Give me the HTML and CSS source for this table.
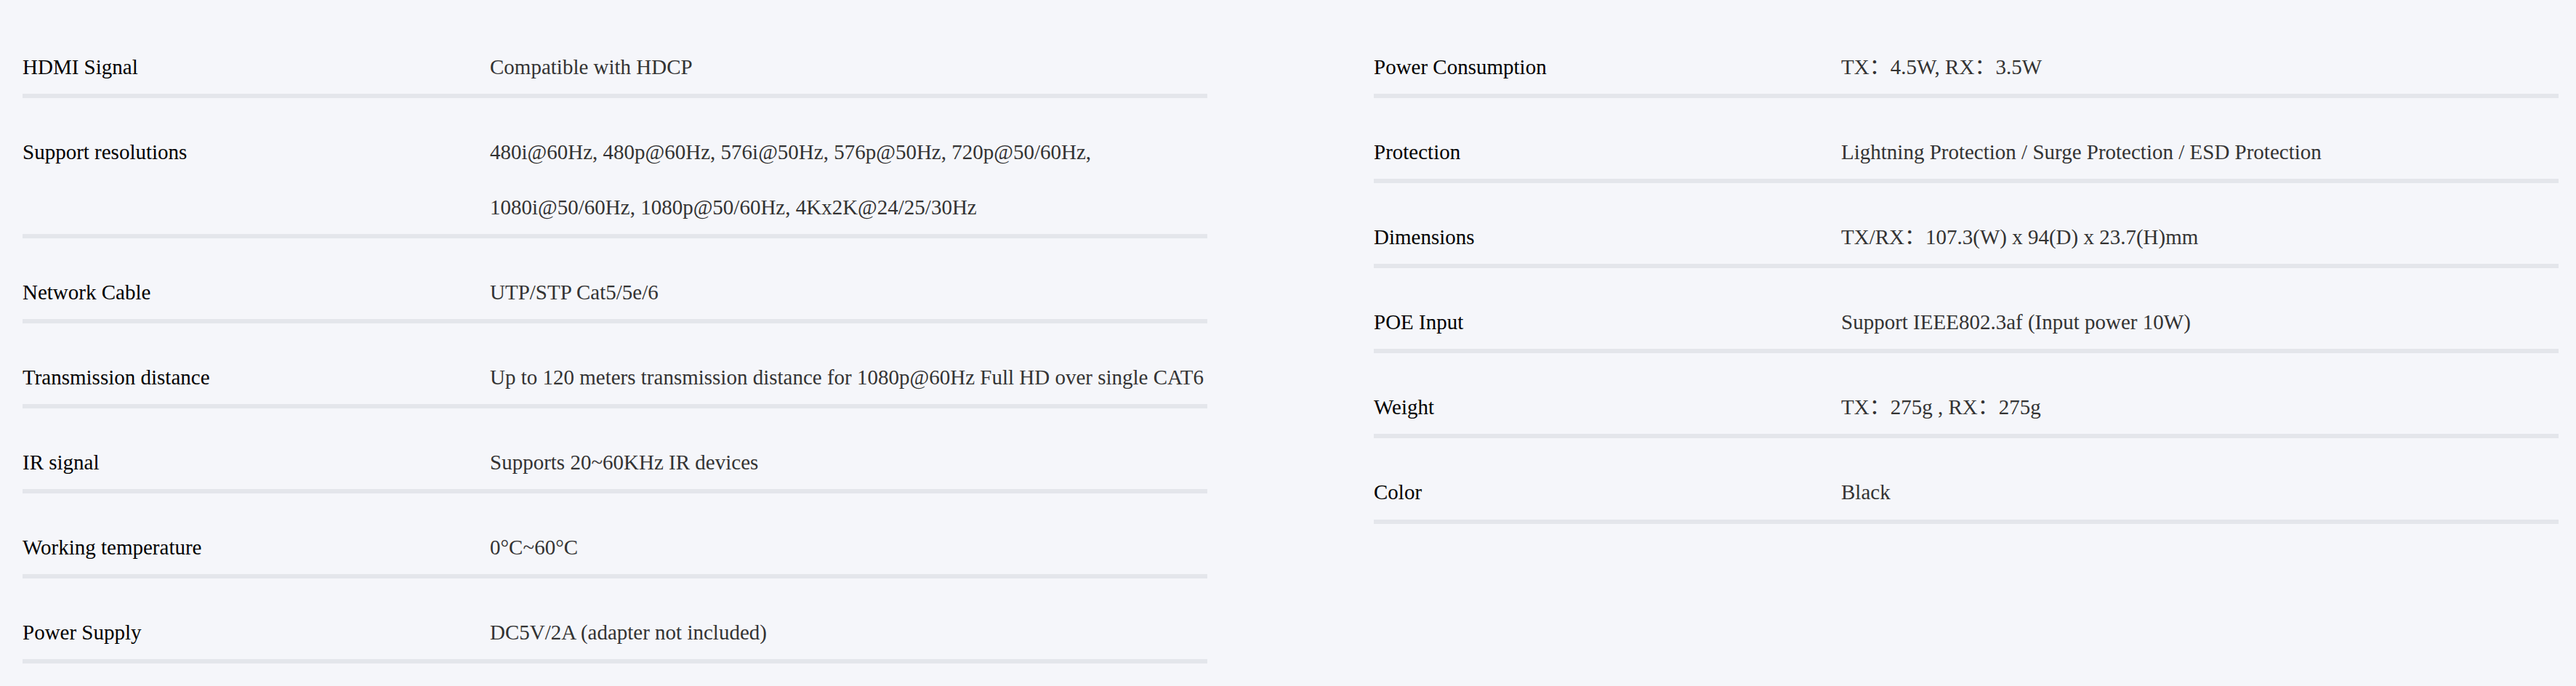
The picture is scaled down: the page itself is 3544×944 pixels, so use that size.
FILE: index.html
```html
<!DOCTYPE html>
<html lang="en">
<head>
<meta charset="utf-8">
<title>Specifications</title>
<link rel="stylesheet" href="styles.css">
</head>
<body>
<main class="specs">
  <section class="spec-col">
    <div class="spec-row"><div class="spec-label">HDMI Signal</div><div class="spec-value">Compatible with HDCP</div></div>
    <div class="spec-row"><div class="spec-label">Support resolutions</div><div class="spec-value">480i@60Hz, 480p@60Hz, 576i@50Hz, 576p@50Hz, 720p@50/60Hz, 1080i@50/60Hz, 1080p@50/60Hz, 4Kx2K@24/25/30Hz</div></div>
    <div class="spec-row"><div class="spec-label">Network Cable</div><div class="spec-value">UTP/STP Cat5/5e/6</div></div>
    <div class="spec-row"><div class="spec-label">Transmission distance</div><div class="spec-value">Up to 120 meters transmission distance for 1080p@60Hz Full HD over single CAT6</div></div>
    <div class="spec-row"><div class="spec-label">IR signal</div><div class="spec-value">Supports 20~60KHz IR devices</div></div>
    <div class="spec-row"><div class="spec-label">Working temperature</div><div class="spec-value">0°C~60°C</div></div>
    <div class="spec-row"><div class="spec-label">Power Supply</div><div class="spec-value">DC5V/2A (adapter not included)</div></div>
  </section>
  <section class="spec-col">
    <div class="spec-row"><div class="spec-label">Power Consumption</div><div class="spec-value">TX：4.5W, RX：3.5W</div></div>
    <div class="spec-row"><div class="spec-label">Protection</div><div class="spec-value">Lightning Protection / Surge Protection / ESD Protection</div></div>
    <div class="spec-row"><div class="spec-label">Dimensions</div><div class="spec-value">TX/RX：107.3(W) x 94(D) x 23.7(H)mm</div></div>
    <div class="spec-row"><div class="spec-label">POE Input</div><div class="spec-value">Support IEEE802.3af (Input power 10W)</div></div>
    <div class="spec-row"><div class="spec-label">Weight</div><div class="spec-value">TX：275g , RX：275g</div></div>
    <div class="spec-row"><div class="spec-label">Color</div><div class="spec-value">Black</div></div>
  </section>
</main>
</body>
</html>
```

FILE: styles.css
```css
html, body {
  margin: 0;
  padding: 0;
  background: #f5f6fa;
}

body {
  font-family: "Liberation Serif", "Times New Roman", "Noto Sans CJK SC", serif;
  font-size: 29px;
}

.specs {
  display: grid;
  grid-template-columns: 1fr 1fr;
  column-gap: 229px;
  padding: 18px 24px 0 31px;
  align-items: start;
}

.spec-col {
  display: flex;
  flex-direction: column;
}

.spec-row {
  display: grid;
  grid-template-columns: 643px 1fr;
  padding-top: 37px;
  border-bottom: 6px solid #e4e6eb;
}

.spec-label,
.spec-value {
  line-height: 75.6px;
  margin-bottom: -1.5px;
}

.spec-label {
  color: #000;
}

.spec-value {
  color: #333;
}
```
